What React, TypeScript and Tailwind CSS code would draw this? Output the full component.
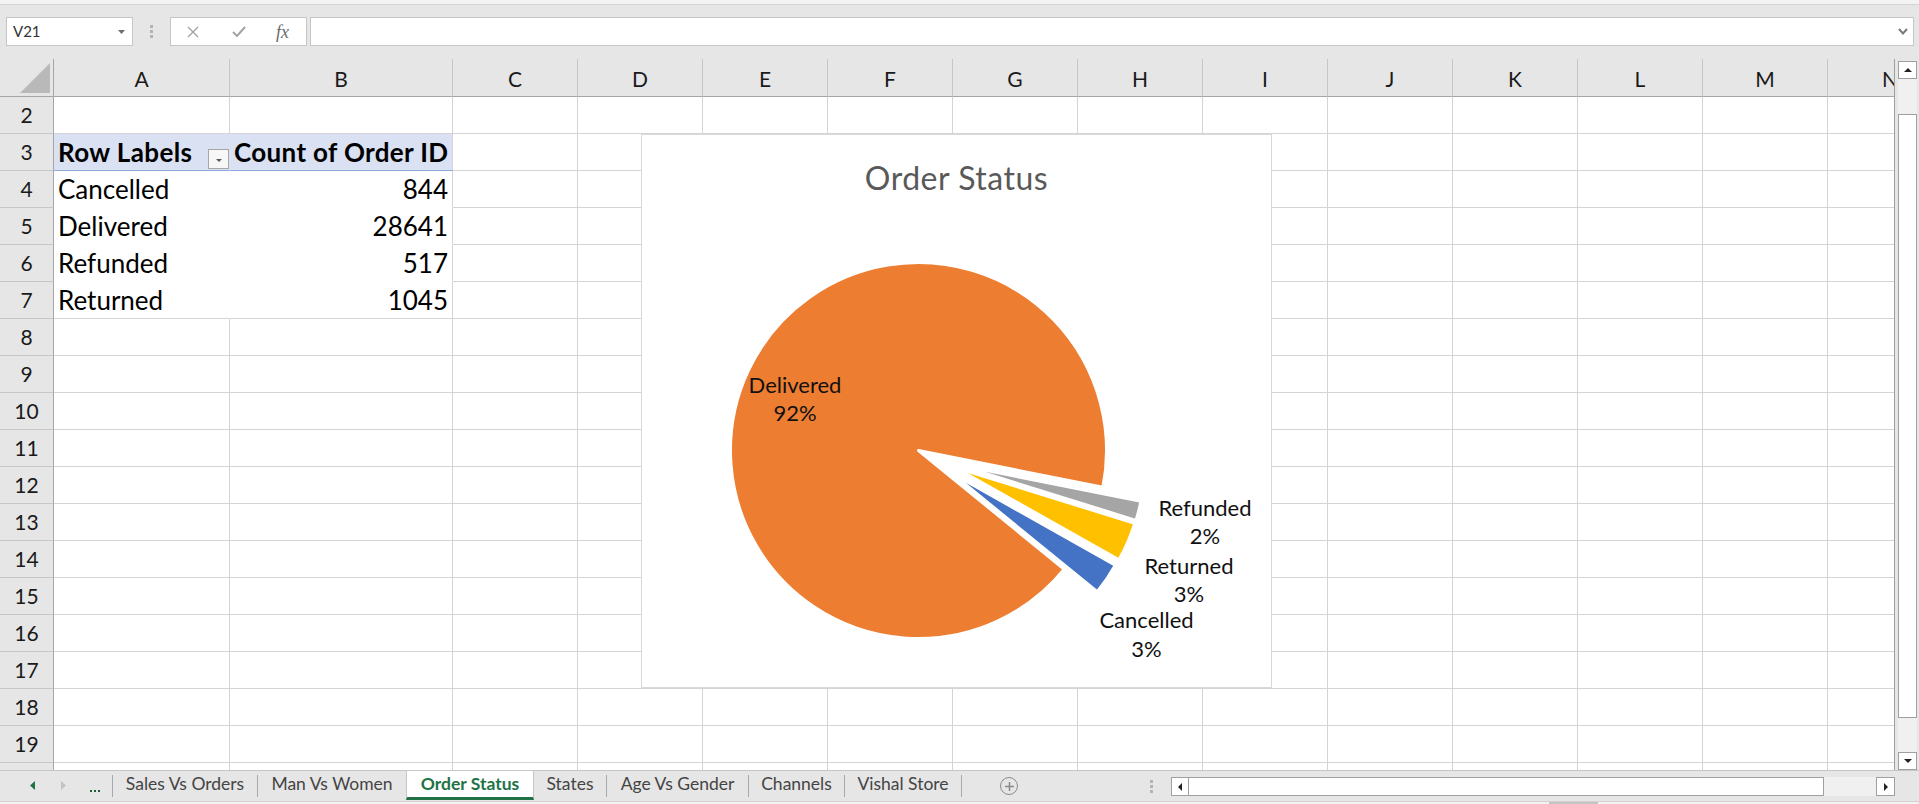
import React from "react";

const COLS: { l: string }[] = [
  "A", "B", "C", "D", "E", "F", "G", "H", "I", "J", "K", "L", "M", "N",
].map((l) => ({ l }));

const ROWS = Array.from({ length: 19 }, (_, i) => i + 2); // 2..20

const PIVOT: Record<number, [string, string]> = {
  4: ["Cancelled", "844"],
  5: ["Delivered", "28641"],
  6: ["Refunded", "517"],
  7: ["Returned", "1045"],
};

function Tri({ dir, color, w = 5, h = 9 }: { dir: "l" | "r" | "u" | "d"; color: string; w?: number; h?: number }) {
  let pts = "";
  if (dir === "l") pts = `${w},0 ${w},${h} 0,${h / 2}`;
  if (dir === "r") pts = `0,0 0,${h} ${w},${h / 2}`;
  if (dir === "u") pts = `0,${h} ${w},${h} ${w / 2},0`;
  if (dir === "d") pts = `0,0 ${w},0 ${w / 2},${h}`;
  return (
    <svg width={w} height={h} viewBox={`0 0 ${w} ${h}`} className="block">
      <polygon points={pts} fill={color} />
    </svg>
  );
}

function FormulaBar() {
  return (
    <div className="h-[54px] shrink-0 flex items-start pt-[12px]">
      <div className="ml-[6px] w-[127px] h-[29px] bg-white border border-[#c6c6c6] flex items-center justify-between pl-[6px] pr-[7px]">
        <span className="text-[15px] text-[#333]">V21</span>
        <Tri dir="d" color="#6d6d6d" w={7} h={4} />
      </div>
      <div className="ml-[17px] mt-[8px] w-[3px] flex flex-col gap-[2px]">
        <div className="w-[3px] h-[3px] bg-[#b4b4b4]" />
        <div className="w-[3px] h-[3px] bg-[#b4b4b4]" />
        <div className="w-[3px] h-[3px] bg-[#b4b4b4]" />
      </div>
      <div className="ml-[17px] w-[137px] h-[29px] bg-white border border-[#c6c6c6] flex items-center">
        <svg width="12" height="12" viewBox="0 0 12 12" className="ml-[16px] block">
          <path d="M1 1 L11 11 M11 1 L1 11" stroke="#a3a3a3" strokeWidth="1.4" fill="none" />
        </svg>
        <svg width="14" height="11" viewBox="0 0 14 11" className="ml-[33px] block">
          <path d="M1 6 L5 10 L13 1" stroke="#a3a3a3" strokeWidth="2" fill="none" />
        </svg>
        <span className="ml-[30px] font-['Liberation_Serif',serif] italic text-[18px] leading-none text-[#6a6a6a]">fx</span>
      </div>
      <div className="ml-[3px] w-[1604px] h-[29px] bg-white border border-[#c6c6c6] flex items-center justify-end pr-[5px]">
        <svg width="10" height="7" viewBox="0 0 10 7" className="block">
          <path d="M1 1 L5 5.5 L9 1" stroke="#7a7a7a" strokeWidth="2" fill="none" />
        </svg>
      </div>
    </div>
  );
}

function DataCell({ r, c }: { r: number; c: number }) {
  if (r === 3 && c === 0) {
    return (
      <div className="h-[37px] bg-[#d9e1f2] border-r border-b border-r-[#d9e1f2] border-b-[#8ea9db] flex items-end justify-between pl-[4px] whitespace-nowrap">
        <span className="text-[26px] font-bold pb-[2px] leading-[31px] tracking-[0.4px]">Row Labels</span>
        <div className="w-[21px] h-[20px] mb-[1px] bg-[#f7f7f7] border border-[#a6a6a6] flex items-center justify-center">
          <div className="mt-[3px]">
            <Tri dir="d" color="#5a5a5a" w={6} h={3} />
          </div>
        </div>
      </div>
    );
  }
  if (r === 3 && c === 1) {
    return (
      <div className="h-[37px] bg-[#d9e1f2] border-r border-b border-r-[#d4d4d4] border-b-[#8ea9db] flex items-end pl-[4px] whitespace-nowrap overflow-hidden">
        <span className="text-[26px] font-bold pb-[2px] leading-[31px] tracking-[0.35px]">Count of Order ID</span>
      </div>
    );
  }
  if (PIVOT[r] && c === 0) {
    const last = r === 7;
    return (
      <div
        className={
          last
            ? "h-[37px] bg-white border-r border-b border-r-white border-b-[#d4d4d4] flex items-end pl-[4px] whitespace-nowrap"
            : "h-[37px] bg-white border-r border-b border-white flex items-end pl-[4px] whitespace-nowrap"
        }
      >
        <span className="text-[26px] pb-[2px] leading-[31px]">{PIVOT[r][0]}</span>
      </div>
    );
  }
  if (PIVOT[r] && c === 1) {
    const last = r === 7;
    return (
      <div
        className={
          last
            ? "h-[37px] bg-white border-r border-b border-[#d4d4d4] flex items-end justify-end pr-[4px] whitespace-nowrap"
            : "h-[37px] bg-white border-r border-b border-r-[#d4d4d4] border-b-white flex items-end justify-end pr-[4px] whitespace-nowrap"
        }
      >
        <span className="text-[26px] pb-[2px] leading-[31px]">{PIVOT[r][1]}</span>
      </div>
    );
  }
  return <div className="h-[37px] bg-white border-r border-b border-[#d4d4d4]" />;
}

const SLICES = [
  { name: "Cancelled", v: 844, color: "#4472C4", ox: 33, oy: 22.5 },
  { name: "Delivered", v: 28641, color: "#ED7D31", ox: 0, oy: 0 },
  { name: "Refunded", v: 517, color: "#A5A5A5", ox: 38, oy: 14 },
  { name: "Returned", v: 1045, color: "#FFC000", ox: 36.7, oy: 17 },
];

function sector(cx: number, cy: number, r: number, a1: number, a2: number) {
  const rad = (a: number) => (a * Math.PI) / 180;
  const x1 = cx + r * Math.cos(rad(a1));
  const y1 = cy + r * Math.sin(rad(a1));
  const x2 = cx + r * Math.cos(rad(a2));
  const y2 = cy + r * Math.sin(rad(a2));
  const large = a2 - a1 > 180 ? 1 : 0;
  return `M${cx},${cy} L${x1},${y1} A${r},${r} 0 ${large} 1 ${x2},${y2} Z`;
}

function Chart() {
  const total = SLICES.reduce((s, x) => s + x.v, 0);
  const cx = 918.5 - 641;
  const cy = 450.5 - 134;
  const r = 188;
  let a = 29.4;
  const paths = SLICES.map((s) => {
    const span = (s.v / total) * 360;
    const a1 = a;
    const a2 = a + span;
    a = a2;
    return { d: sector(cx + s.ox, cy + s.oy, r, a1, a2), color: s.color, key: s.name };
  });
  const labels: [string, number, number][] = [
    ["Delivered", 154, 259],
    ["92%", 154, 287],
    ["Refunded", 564, 382],
    ["2%", 564, 410],
    ["Returned", 548, 440],
    ["3%", 548, 468],
    ["Cancelled", 505.5, 494],
    ["3%", 505.5, 523],
  ];
  return (
    <div className="absolute left-[641px] top-[75px] w-[631px] h-[554px] bg-white border border-[#d9d9d9] flex flex-col items-center">
      <div className="pt-[24px] text-[32px] leading-[38px] text-[#595959] tracking-[0.5px]">Order Status</div>
      <svg width="631" height="554" viewBox="0 0 631 554" className="absolute left-[-1px] top-[-1px]">
        {paths.map((p) => (
          <path key={p.key} d={p.d} fill={p.color} stroke="#ffffff" strokeWidth="3" strokeLinejoin="round" />
        ))}
        {labels.map(([t, x, y], i) => (
          <text key={i} x={x} y={y} textAnchor="middle" fontFamily="Lato, sans-serif" fontSize="22" fill="#111111">
            {t}
          </text>
        ))}
      </svg>
    </div>
  );
}

function Sheet() {
  return (
    <div className="relative w-[1895px] h-[711px] shrink-0 overflow-hidden bg-white border-r border-[#9f9f9f]">
      <div className="grid w-max grid-cols-[54px_176px_223px_repeat(12,125px)]">
        <div className="h-[38px] bg-[#e6e6e6] border-r border-b border-[#a6a6a6] flex items-end justify-end pr-[3px] pb-[3px]">
          <svg width="30" height="30" viewBox="0 0 30 30" className="block">
            <polygon points="0,30 30,30 30,0" fill="#b9b9b9" />
          </svg>
        </div>
        {COLS.map((c) => (
          <div
            key={c.l}
            className="h-[38px] bg-[#e6e6e6] border-r border-b border-r-[#c6c6c6] border-b-[#a6a6a6] flex items-end justify-center pb-[2px] text-[21px] text-[#1a1a1a]"
          >
            {c.l}
          </div>
        ))}
        {ROWS.map((r) => (
          <React.Fragment key={r}>
            <div className="h-[37px] bg-[#e6e6e6] border-r border-b border-r-[#a6a6a6] border-b-[#c6c6c6] flex items-end justify-center pb-[3px] text-[21px] text-[#1a1a1a]">
              {r < 20 ? r : ""}
            </div>
            {COLS.map((c, ci) => (
              <DataCell key={c.l} r={r} c={ci} />
            ))}
          </React.Fragment>
        ))}
      </div>
      <Chart />
    </div>
  );
}

function VScroll() {
  return (
    <div className="w-[24px] h-[711px] shrink-0 bg-[#e6e6e6] pt-[2px] pl-[3px]">
      <div className="w-[19px] h-[709px] bg-[#f0f0f0] flex flex-col">
        <div className="h-[18px] bg-white border border-[#a0a0a0] flex items-center justify-center">
          <Tri dir="u" color="#222" w={8} h={4} />
        </div>
        <div className="h-[35px]" />
        <div className="h-[604px] bg-white border border-[#a0a0a0]" />
        <div className="flex-1" />
        <div className="h-[18px] bg-white border border-[#a0a0a0] flex items-center justify-center">
          <Tri dir="d" color="#222" w={8} h={4} />
        </div>
      </div>
    </div>
  );
}

function Sep() {
  return <div className="w-[1px] h-[22px] mt-[4px] bg-[#a9a9a9] shrink-0" />;
}

function Tab({ w, label }: { w: string; label: string }) {
  return (
    <div className={`${w} h-[27px] shrink-0 flex items-center justify-center text-[17.5px] text-[#444] whitespace-nowrap`}>
      {label}
    </div>
  );
}

function TabBar() {
  return (
    <div className="h-[34px] shrink-0 border-t border-[#c6c6c6] flex flex-col">
      <div className="h-[30px] flex items-start">
        <div className="w-[112px] h-[30px] shrink-0 flex items-start">
          <div className="ml-[30px] mt-[10px]">
            <Tri dir="l" color="#217346" w={5} h={9} />
          </div>
          <div className="ml-[26px] mt-[10px]">
            <Tri dir="r" color="#c3c3c3" w={5} h={9} />
          </div>
          <div className="ml-[24px] mt-[19px] flex gap-[2px]">
            <div className="w-[2px] h-[2px] bg-[#1e5c37]" />
            <div className="w-[2px] h-[2px] bg-[#1e5c37]" />
            <div className="w-[2px] h-[2px] bg-[#1e5c37]" />
          </div>
        </div>
        <Sep />
        <Tab w="w-[144px]" label="Sales Vs Orders" />
        <Sep />
        <Tab w="w-[148px]" label="Man Vs Women" />
        <div className="w-[128px] h-[29px] shrink-0 bg-white border-x border-[#c6c6c6] border-b-[3px] border-b-[#217346] flex items-center justify-center text-[17.5px] font-bold text-[#217346] whitespace-nowrap">
          Order Status
        </div>
        <Tab w="w-[72px]" label="States" />
        <Sep />
        <Tab w="w-[141px]" label="Age Vs Gender" />
        <Sep />
        <Tab w="w-[95px]" label="Channels" />
        <Sep />
        <Tab w="w-[116px]" label="Vishal Store" />
        <Sep />
        <div className="w-[38px] shrink-0" />
        <div className="w-[18px] h-[18px] mt-[6px] shrink-0 rounded-full border-[1.5px] border-[#8a8a8a] flex items-center justify-center">
          <svg width="9" height="9" viewBox="0 0 9 9" className="block">
            <path d="M4.5 0 V9 M0 4.5 H9" stroke="#8a8a8a" strokeWidth="1.5" />
          </svg>
        </div>
        <div className="w-[132px] shrink-0" />
        <div className="w-[3px] mt-[9px] shrink-0 flex flex-col gap-[2px]">
          <div className="w-[3px] h-[3px] bg-[#b4b4b4]" />
          <div className="w-[3px] h-[3px] bg-[#b4b4b4]" />
          <div className="w-[3px] h-[3px] bg-[#b4b4b4]" />
        </div>
        <div className="w-[18px] shrink-0" />
        <div className="w-[724px] h-[19px] mt-[6px] shrink-0 flex">
          <div className="w-[18px] h-[19px] bg-white border border-[#a0a0a0] flex items-center justify-center">
            <Tri dir="l" color="#222" w={4} h={8} />
          </div>
          <div className="w-[635px] h-[19px] bg-white border-y border-r border-[#a0a0a0]" />
          <div className="w-[52px] h-[19px] bg-[#f0f0f0]" />
          <div className="w-[19px] h-[19px] bg-white border border-[#a0a0a0] flex items-center justify-center">
            <Tri dir="r" color="#222" w={4} h={8} />
          </div>
        </div>
      </div>
      <div className="h-[3px] border-t border-[#d0d0d0] bg-[#f3f3f3] flex">
        <div className="ml-[1549px] w-[49px] h-[2px] bg-[#c4c4c4]" />
      </div>
    </div>
  );
}

export default function App() {
  return (
    <div className="w-[1919px] h-[804px] overflow-hidden bg-[#e6e6e6] flex flex-col font-['Lato',sans-serif] text-black select-none">
      <div className="h-[5px] shrink-0 bg-[#f3f3f3] border-b border-[#d4d4d4]" />
      <FormulaBar />
      <div className="flex h-[711px] shrink-0">
        <Sheet />
        <VScroll />
      </div>
      <TabBar />
    </div>
  );
}
